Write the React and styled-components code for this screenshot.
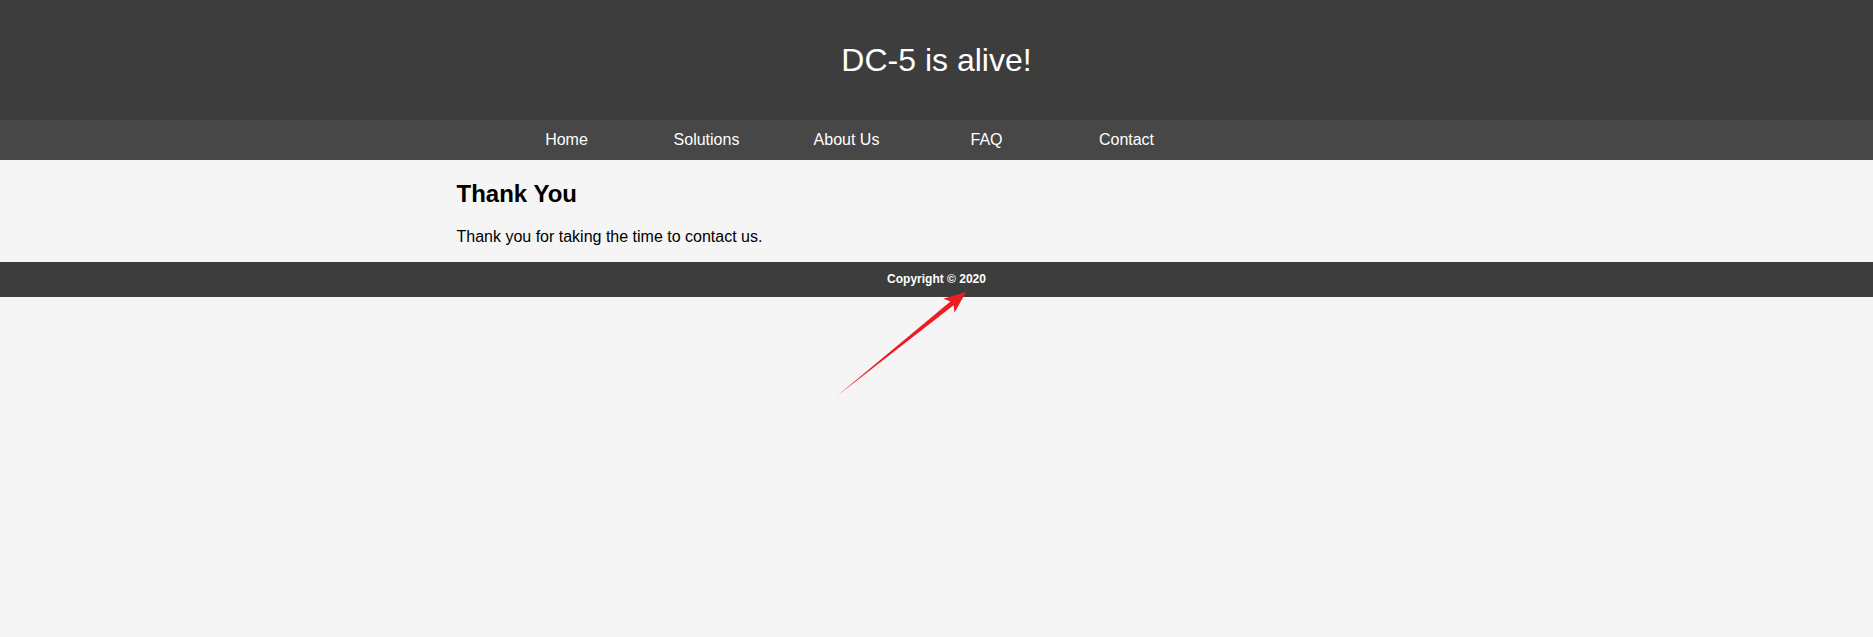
import React from "react";
import styled, { createGlobalStyle } from "styled-components";

const GlobalStyle = createGlobalStyle`
  html, body {
    margin: 0;
    padding: 0;
    background: #f5f5f5;
    font-family: "Liberation Sans", Arial, sans-serif;
    color: #000;
  }
`;

const Page = styled.div`
  position: relative;
  min-height: 637px;
`;

const Header = styled.header`
  height: 120px;
  background: #3d3d3d;
  display: flex;
  align-items: center;
  justify-content: center;
`;

const Title = styled.h1`
  margin: 0;
  font-size: 32px;
  font-weight: normal;
  color: #fff;
  line-height: normal;
`;

const Nav = styled.nav`
  height: 40px;
  background: #474747;
`;

const Container = styled.div`
  width: 960px;
  margin: 0 auto;
`;

const NavList = styled.ul`
  display: flex;
  margin: 0;
  padding: 0 0 0 40px;
  list-style: none;
`;

const NavItem = styled.li`
  width: 140px;
  text-align: center;
  line-height: 40px;
  font-size: 16px;
`;

const NavLink = styled.a`
  color: #fff;
  text-decoration: none;
`;

const Main = styled.main`
  display: flow-root;
`;

const Heading = styled.h2`
  font-size: 24px;
  font-weight: bold;
  margin: 20px 0;
`;

const Text = styled.p`
  font-size: 16px;
  margin: 16px 0;
`;

const Footer = styled.footer`
  height: 35px;
  line-height: 35px;
  background: #3d3d3d;
  color: #fff;
  text-align: center;
  font-size: 12px;
  font-weight: bold;
`;

const Arrow = styled.svg`
  position: absolute;
  left: 830px;
  top: 285px;
  width: 140px;
  height: 120px;
  pointer-events: none;
`;

const links = ["Home", "Solutions", "About Us", "FAQ", "Contact"];

export default function App() {
  return (
    <Page>
      <GlobalStyle />
      <Header>
        <Title>DC-5 is alive!</Title>
      </Header>
      <Nav>
        <Container>
          <NavList>
            {links.map((l) => (
              <NavItem key={l}>
                <NavLink href="#">{l}</NavLink>
              </NavItem>
            ))}
          </NavList>
        </Container>
      </Nav>
      <Main>
        <Container>
          <Heading>Thank You</Heading>
          <Text>Thank you for taking the time to contact us.</Text>
        </Container>
      </Main>
      <Footer>Copyright © 2020</Footer>
      <Arrow viewBox="0 0 140 120">
        <polygon
          points="7,111 120.4,16.4 113.2,13.8 136,7 124.5,27.8 123.6,20.2"
          fill="#ed1c24"
        />
      </Arrow>
    </Page>
  );
}
